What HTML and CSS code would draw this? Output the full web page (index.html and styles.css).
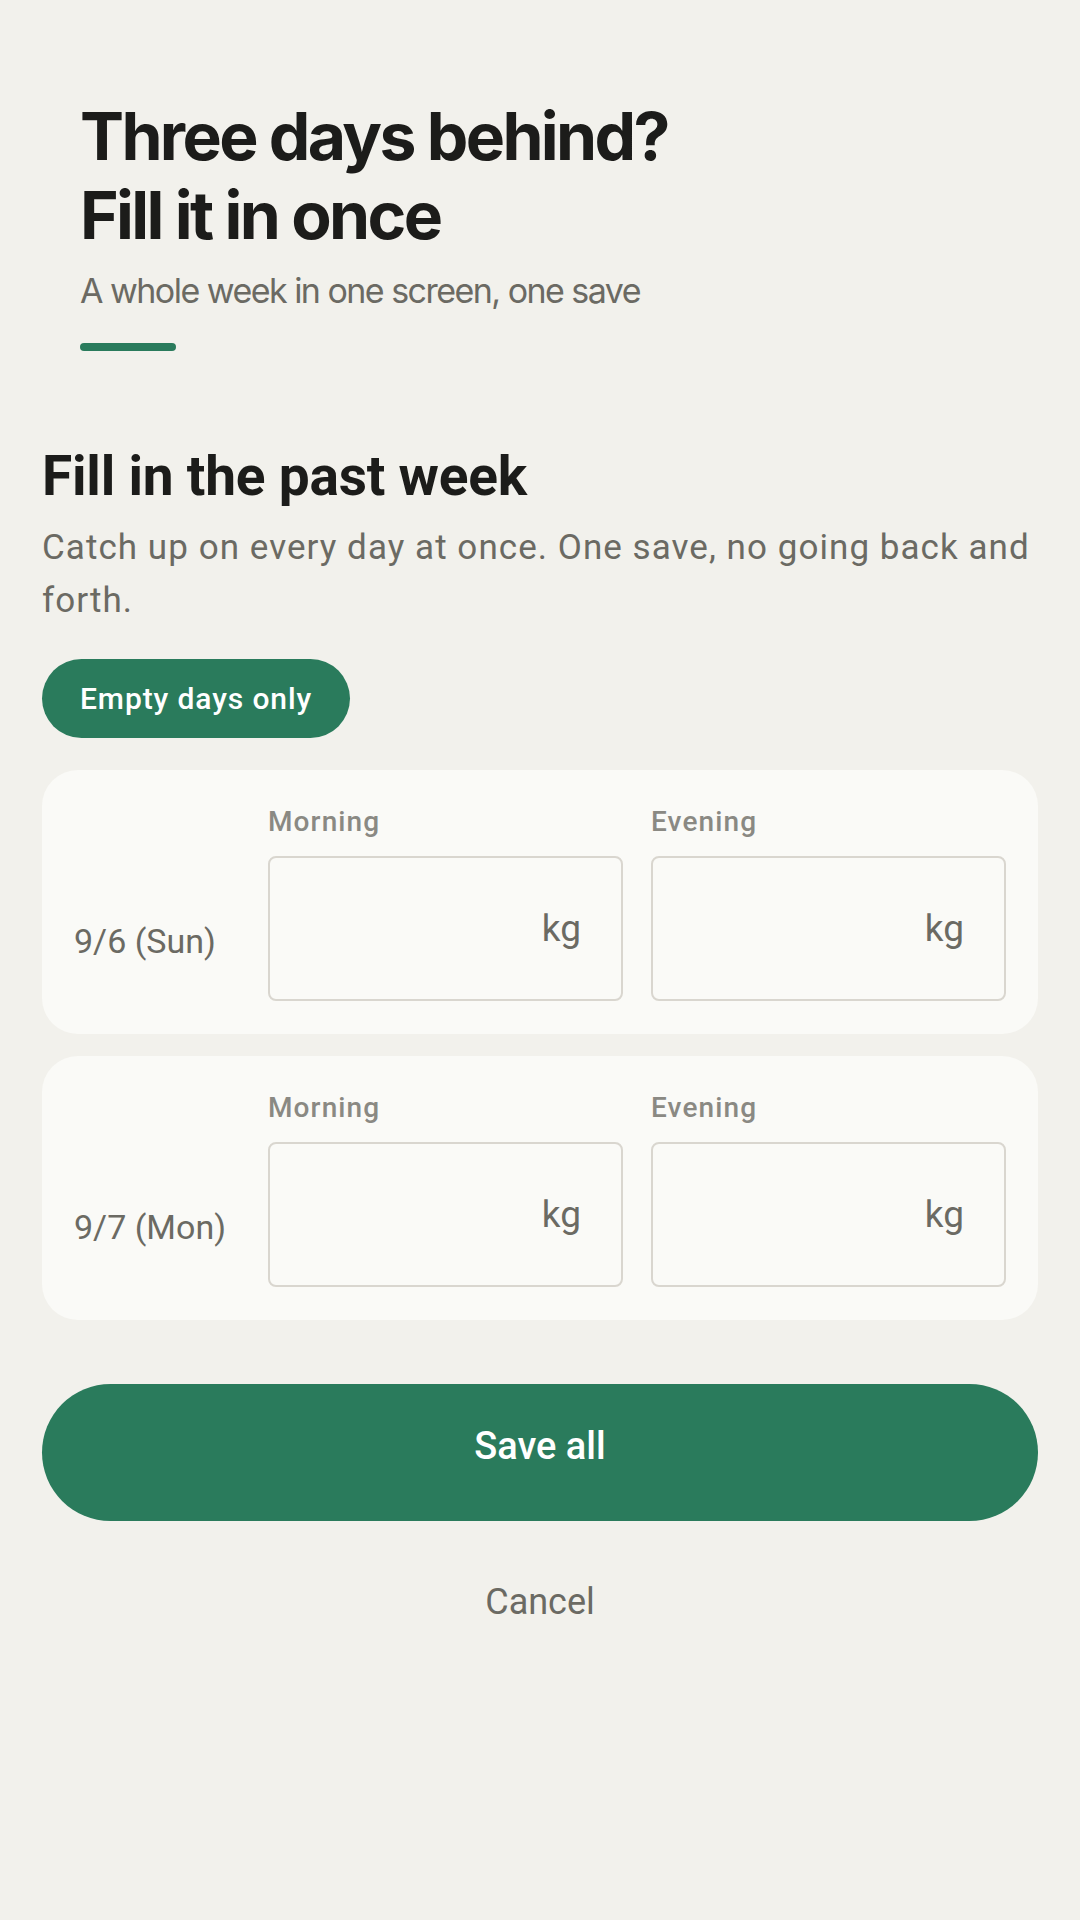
FILE: index.html
```html
<!DOCTYPE html>
<html lang="en">
<head>
<meta charset="utf-8">
<title>Fill in the past week</title>
<link rel="stylesheet" href="styles.css">
</head>
<body>
<main class="screen">
  <header class="hero">
    <h1 class="hero-title">Three days behind?<br>Fill it in once</h1>
    <p class="hero-sub">A whole week in one screen, one save</p>
    <div class="hero-bar"></div>
  </header>

  <section class="sheet">
    <h2 class="sheet-title">Fill in the past week</h2>
    <p class="sheet-desc">Catch up on every day at once. One save, no going back and forth.</p>
    <button class="chip" type="button">Empty days only</button>

    <div class="days">
      <div class="day-card">
        <div class="day-date">9/6 (Sun)</div>
        <label class="field">
          <span class="field-label">Morning</span>
          <span class="weight-box"><input class="weight-input" type="text" inputmode="decimal"><span class="unit">kg</span></span>
        </label>
        <label class="field">
          <span class="field-label">Evening</span>
          <span class="weight-box"><input class="weight-input" type="text" inputmode="decimal"><span class="unit">kg</span></span>
        </label>
      </div>
      <div class="day-card">
        <div class="day-date">9/7 (Mon)</div>
        <label class="field">
          <span class="field-label">Morning</span>
          <span class="weight-box"><input class="weight-input" type="text" inputmode="decimal"><span class="unit">kg</span></span>
        </label>
        <label class="field">
          <span class="field-label">Evening</span>
          <span class="weight-box"><input class="weight-input" type="text" inputmode="decimal"><span class="unit">kg</span></span>
        </label>
      </div>
    </div>

    <button class="save-btn" type="button">Save all</button>
    <button class="cancel-btn" type="button">Cancel</button>
  </section>
</main>
</body>
</html>
```
FILE: styles.css
```css
* { box-sizing: border-box; }

html, body {
  margin: 0;
  background: #f2f1ec;
}

body {
  font-family: Roboto, "Noto Sans", "Liberation Sans", sans-serif;
  color: #1c1c1a;
}

.screen {
  width: 1080px;
  min-height: 1920px;
  padding: 97px 42px 0;
}

/* Hero */
.hero {
  padding-left: 38px;
}

.hero-title {
  margin: 0;
  font-family: Inter, Roboto, sans-serif;
  font-weight: 700;
  font-size: 66px;
  line-height: 79px;
  letter-spacing: -0.04em;
  color: #1c1c1a;
}

.hero-sub {
  margin: 12px 0 0;
  font-family: Inter, Roboto, sans-serif;
  font-weight: 400;
  font-size: 34px;
  line-height: 48px;
  letter-spacing: -0.045em;
  color: #6b6a63;
}

.hero-bar {
  width: 96px;
  height: 8px;
  margin-top: 28px;
  border-radius: 4px;
  background: #2a7b5c;
}

/* Sheet */
.sheet-title {
  margin: 92px 0 0;
  font-weight: 700;
  font-size: 55px;
  line-height: 66px;
  letter-spacing: -0.004em;
  color: #1c1c1a;
}

.sheet-desc {
  margin: 12px 0 0;
  font-size: 35px;
  line-height: 53px;
  letter-spacing: 0.03em;
  color: #6b6a63;
}

.chip {
  display: inline-flex;
  align-items: center;
  height: 79px;
  margin-top: 32px;
  padding: 0 38px;
  border: 0;
  border-radius: 40px;
  background: #2a7b5c;
  color: #ffffff;
  font-family: Roboto, sans-serif;
  font-weight: 500;
  font-size: 30px;
  letter-spacing: 0.03em;
}

.days {
  display: flex;
  flex-direction: column;
  gap: 22px;
  margin-top: 32px;
}

.day-card {
  display: grid;
  grid-template-columns: 166px minmax(0, 1fr) minmax(0, 1fr);
  column-gap: 28px;
  padding: 32px 32px 33px;
  border-radius: 36px;
  background: #fafaf7;
}

.day-date {
  align-self: end;
  display: flex;
  align-items: center;
  height: 145px;
  padding-top: 24px;
  font-size: 34px;
  color: #6b6a63;
  white-space: nowrap;
}

.field {
  display: flex;
  flex-direction: column;
  gap: 14px;
  min-width: 0;
}

.field-label {
  font-weight: 500;
  font-size: 28px;
  line-height: 40px;
  letter-spacing: 0.04em;
  color: #8a8983;
}

.weight-box {
  display: flex;
  align-items: center;
  height: 145px;
  padding: 0 40px 0 16px;
  border: 2px solid #d9d6cf;
  border-radius: 8px;
  background: #fafaf7;
}

.weight-input {
  flex: 1 1 0;
  width: 0;
  min-width: 0;
  border: 0;
  outline: 0;
  padding: 0;
  background: transparent;
  font-family: Roboto, sans-serif;
  font-size: 37px;
  color: #1c1c1a;
}

.unit {
  font-size: 37px;
  color: #6b6a63;
}

.save-btn {
  display: flex;
  align-items: center;
  justify-content: center;
  width: 100%;
  height: 137px;
  margin-top: 64px;
  padding: 0 0 14px;
  border: 0;
  border-radius: 69px;
  background: #2a7b5c;
  color: #ffffff;
  font-family: Roboto, sans-serif;
  font-weight: 500;
  font-size: 38px;
}

.cancel-btn {
  display: block;
  width: 100%;
  margin-top: 60px;
  padding: 0;
  border: 0;
  background: none;
  font-family: Roboto, sans-serif;
  font-size: 36px;
  color: #6b6a63;
  text-align: center;
}
```
